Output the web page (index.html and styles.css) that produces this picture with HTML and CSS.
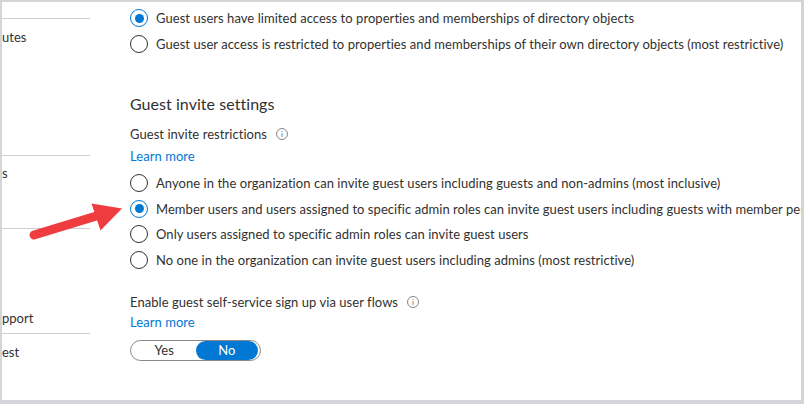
FILE: index.html
```html
<!DOCTYPE html>
<html>
<head>
<meta charset="utf-8">
<link rel="stylesheet" href="styles.css">
</head>
<body>
<div class="frame">
  <nav class="nav">
    <div class="nav-line nav-line-1"></div>
    <div class="nav-item item-1">utes</div>
    <div class="nav-line nav-line-2"></div>
    <div class="nav-item item-2">s</div>
    <div class="nav-line nav-line-3"></div>
    <div class="nav-item item-3">pport</div>
    <div class="nav-line nav-line-4"></div>
    <div class="nav-item item-4">est</div>
  </nav>
  <main class="main">
    <div class="group group-1">
      <label class="radio-row"><span class="radio checked"></span><span class="radio-text">Guest users have limited access to properties and memberships of directory objects</span></label>
      <label class="radio-row"><span class="radio"></span><span class="radio-text">Guest user access is restricted to properties and memberships of their own directory objects (most restrictive)</span></label>
    </div>
    <h2 class="heading">Guest invite settings</h2>
    <div class="field-label label-1">Guest invite restrictions <span class="info">i</span></div>
    <a class="learn learn-1">Learn more</a>
    <div class="group group-2">
      <label class="radio-row row2"><span class="radio"></span><span class="radio-text">Anyone in the organization can invite guest users including guests and non-admins (most inclusive)</span></label>
      <label class="radio-row row2"><span class="radio checked"></span><span class="radio-text">Member users and users assigned to specific admin roles can invite guest users including guests with member permissions</span></label>
      <label class="radio-row row2"><span class="radio"></span><span class="radio-text">Only users assigned to specific admin roles can invite guest users</span></label>
      <label class="radio-row row2"><span class="radio"></span><span class="radio-text">No one in the organization can invite guest users including admins (most restrictive)</span></label>
    </div>
    <div class="field-label label-2">Enable guest self-service sign up via user flows <span class="info">i</span></div>
    <a class="learn learn-2">Learn more</a>
    <div class="toggle">
      <span class="toggle-opt">Yes</span>
      <span class="toggle-opt selected">No</span>
    </div>
    <h2 class="heading heading-cut">External collaboration restrictions</h2>
  </main>
  <svg class="arrow" width="140" height="60" viewBox="0 0 140 60">
    <line x1="34" y1="35" x2="98" y2="15.5" stroke="#ef3d3f" stroke-width="9" stroke-linecap="round"/>
    <polygon points="91.5,3.5 122,8.5 100.5,30.5" fill="#ef3d3f"/>
  </svg>
</div>
</body>
</html>
```
FILE: styles.css
```css
html, body {
  margin: 0;
  padding: 0;
  background: #ffffff;
}
body {
  font-family: Lato, "Open Sans", sans-serif;
  color: #323130;
}
.frame {
  position: relative;
  box-sizing: border-box;
  width: 804px;
  height: 404px;
  border-style: solid;
  border-color: #d3d5d8;
  border-width: 2px 3px 4px 2px;
  display: flex;
  overflow: hidden;
  background: #fff;
}
.nav {
  width: 88px;
  flex: none;
  display: flex;
  flex-direction: column;
  font-size: 13px;
  color: #323130;
}
.nav-line {
  height: 1px;
  background: #cfcfcf;
}
.nav-line-1 { margin-top: 16px; }
.nav-item {
  height: 20px;
  line-height: 20px;
  white-space: nowrap;
}
.item-1 { margin-top: 8px; }
.nav-line-2 { margin-top: 108px; }
.item-2 { margin-top: 7px; }
.nav-line-3 { margin-top: 45px; }
.item-3 { margin-top: 79px; }
.nav-line-4 { margin-top: 5px; }
.item-4 { margin-top: 8px; }

.main {
  flex: 1;
  padding-left: 40px;
  padding-top: 3px;
  display: flex;
  flex-direction: column;
  align-items: flex-start;
  font-size: 13px;
  letter-spacing: 0.05px;
  min-width: 0;
}
.group {
  display: flex;
  flex-direction: column;
}
.radio-row {
  display: flex;
  align-items: center;
  height: 26px;
  white-space: nowrap;
}
.row2 { height: 25.7px; }
.radio {
  box-sizing: border-box;
  width: 18px;
  height: 18px;
  border: 1px solid #323130;
  border-radius: 50%;
  margin-right: 8px;
  flex: none;
  display: flex;
  align-items: center;
  justify-content: center;
}
.radio.checked {
  border-color: #0078d4;
}
.radio.checked::after {
  content: "";
  width: 9px;
  height: 9px;
  border-radius: 50%;
  background: #0078d4;
}
.heading {
  margin: 36px 0 0 0;
  font-size: 16px;
  font-weight: 400;
  line-height: 22px;
  color: #323130;
  white-space: nowrap;
}
.field-label {
  line-height: 20px;
  height: 20px;
  display: flex;
  align-items: center;
  white-space: nowrap;
}
.label-1 { margin-top: 9px; }
.label-2 { margin-top: 19px; }
.info {
  box-sizing: border-box;
  width: 12px;
  height: 12px;
  border: 1px solid #8a8886;
  border-radius: 50%;
  margin-left: 9px;
  font-size: 8px;
  line-height: 10px;
  text-align: center;
  color: #605e5c;
}
.learn {
  display: block;
  color: #0078d4;
  line-height: 20px;
  height: 20px;
}
.learn-1 { margin-top: 2px; }
.learn-2 { margin-top: 0; }
.group-2 { margin-top: 4px; }
.toggle {
  margin-top: 8px;
  box-sizing: border-box;
  width: 131px;
  height: 24px;
  border: 1px solid #8a8886;
  border-radius: 12px;
  display: flex;
  align-items: center;
  padding: 0 2px;
}
.toggle-opt {
  flex: 1;
  text-align: center;
  height: 19px;
  line-height: 19px;
  border-radius: 10px;
}
.toggle-opt.selected {
  background: #0078d4;
  color: #ffffff;
}
.heading-cut {
  margin-top: 33px;
}
.arrow {
  position: absolute;
  left: -2px;
  top: 198px;
}
```
